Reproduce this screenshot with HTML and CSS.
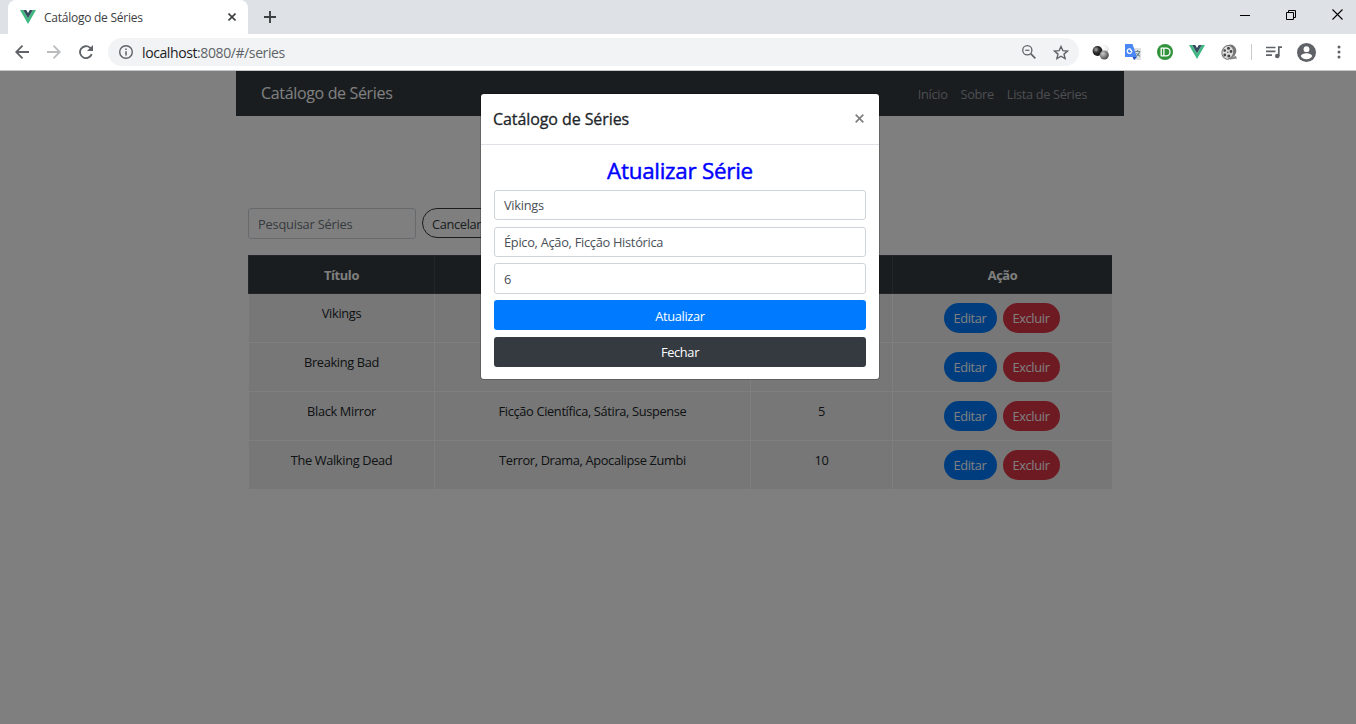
FILE: index.html
```html
<!DOCTYPE html>
<html lang="pt-BR">
<head>
<meta charset="utf-8">
<title>Catálogo de Séries</title>
<link rel="stylesheet" href="styles.css">
</head>
<body>
<header class="browser">
  <div class="tabstrip">
    <div class="tab">
      <svg class="vue" width="16" height="14" viewBox="0 0 16 14"><path fill="#41b883" d="M0 0h3.2L8 8.2 12.8 0H16L8 14z"/><path fill="#35495e" d="M3.2 0h3L8 3.1 9.800 0h3L8 8.2z"/></svg>
      <span class="tab-title">Catálogo de Séries</span>
      <svg class="tab-close" width="8" height="8" viewBox="0 0 8 8"><path d="M.5.5l7 7M7.500.5l-7 7" stroke="#3c4043" stroke-width="1.6"/></svg>
    </div>
    <svg class="new-tab" width="12" height="12" viewBox="0 0 12 12"><path d="M6 0v12M0 6h12" stroke="#3c4043" stroke-width="1.9"/></svg>
    <div class="window-controls">
      <svg width="10" height="10" viewBox="0 0 10 10"><path d="M0 5.500h10" stroke="#000"/></svg>
      <svg width="10" height="10" viewBox="0 0 10 10"><path d="M.5 2.500h7v7h-7zM2.500 2.500v-2h7v7h-2" fill="none" stroke="#000"/></svg>
      <svg width="11" height="11" viewBox="0 0 11 11"><path d="M.5.5l10 10M10.500.5l-10 10" stroke="#000" stroke-width="1.100"/></svg>
    </div>
  </div>
  <div class="toolbar">
    <div class="nav-icons">
      <svg width="14" height="14" viewBox="0 0 14 14" fill="none" stroke="#5f6368" stroke-width="1.800"><path d="M14 7H1.500M7.500.7L1.200 7l6.300 6.300"/></svg>
      <svg width="14" height="14" viewBox="0 0 14 14" fill="none" stroke="#babcbe" stroke-width="1.800"><path d="M0 7h12.500M6.500.7L12.800 7l-6.300 6.300"/></svg>
      <svg width="14" height="14" viewBox="0 0 14 14"><path d="M12.700 9.200A6 6 0 1 1 11 2.600l1.200 1.100" fill="none" stroke="#5f6368" stroke-width="1.900"/><path d="M14 0v6H8z" fill="#5f6368"/></svg>
    </div>
    <div class="omnibox">
      <svg width="14" height="14" viewBox="0 0 14 14"><circle cx="7" cy="7" r="6.300" fill="none" stroke="#5f6368" stroke-width="1.400"/><path d="M7 6.200v4.300M7 3.400V5" stroke="#5f6368" stroke-width="1.500"/></svg>
      <span class="url"><b>localhost</b>:8080/#/series</span>
      <svg class="zoom-icon" width="14" height="14" viewBox="0 0 14 14" fill="none" stroke="#5f6368"><circle cx="5.300" cy="5.300" r="4.600" stroke-width="1.300"/><path d="M8.700 8.700L13.300 13.300" stroke-width="1.700"/><path d="M3.200 5.300h4.200" stroke-width="1.200"/></svg>
      <svg width="16" height="15" viewBox="0 0 16 15"><path d="M8 1.500l1.900 4.200 4.600.4-3.500 3 1.100 4.500L8 11.200l-4.100 2.400L5 9.100l-3.500-3 4.600-.4z" fill="none" stroke="#5f6368" stroke-width="1.400"/></svg>
    </div>
    <div class="extensions">
      <svg width="17" height="16" viewBox="0 0 17 16">
        <defs>
          <radialGradient id="dark" cx=".35" cy=".35" r=".7"><stop offset="0" stop-color="#aaa"/><stop offset=".45" stop-color="#333"/><stop offset="1" stop-color="#111"/></radialGradient>
          <radialGradient id="light" cx=".4" cy=".35" r=".7"><stop offset="0" stop-color="#fff"/><stop offset=".7" stop-color="#eee"/><stop offset="1" stop-color="#bbb"/></radialGradient>
          <radialGradient id="mid" cx=".35" cy=".35" r=".7"><stop offset="0" stop-color="#ccc"/><stop offset="1" stop-color="#444"/></radialGradient>
        </defs>
        <circle cx="12" cy="5" r="4.500" fill="url(#light)"/><circle cx="5.500" cy="7" r="4.900" fill="url(#dark)"/><circle cx="12.300" cy="11" r="4.500" fill="url(#mid)"/>
      </svg>
      <svg width="16" height="16" viewBox="0 0 16 16"><path fill="#e0e0e0" d="M6 4h10v12H9z"/><path fill="#4a87f4" d="M0 0h7.500L12 13H0z"/><path fill="#2750b8" d="M7.500 13H12l-3 3z"/><path d="M7 5H4.800M6.800 5.200A2.300 2.300 0 1 1 6.200 4" transform="translate(0 1.500)" fill="none" stroke="#fff" stroke-width="1.200"/><path d="M10.300 7.500h5M12.500 6v1.500M14.500 8c-.5 2-2 3.500-3 4M11.500 9c.8 1.500 2 2.500 3.500 3.300" fill="none" stroke="#6f8a91" stroke-width="1.100"/></svg>
      <svg width="16" height="16" viewBox="0 0 16 16"><circle cx="8" cy="8" r="8" fill="#31933c"/><path d="M4.200 4.200h5a3.600 3.600 0 0 1 0 7.600h-5zM6.900 4v8" fill="none" stroke="#fff" stroke-width="1.300" stroke-linejoin="round"/></svg>
      <svg width="16" height="14" viewBox="0 0 16 14"><path fill="#41b883" d="M0 0h3.200L8 8.200 12.800 0H16L8 14z"/><path fill="#35495e" d="M3.200 0h3L8 3.100 9.800 0h3L8 8.200z"/></svg>
      <svg width="16" height="16" viewBox="0 0 16 16"><ellipse cx="9.500" cy="7" rx="5.800" ry="6.500" fill="#777"/><path d="M8 13.500l7-1.500 1 2.500-7 1z" fill="#888"/><ellipse cx="6.800" cy="8.300" rx="5.800" ry="6.900" transform="rotate(14 6.800 8.300)" fill="#ddd" stroke="#777"/><g fill="#444"><circle cx="7.500" cy="4.200" r="1.500"/><circle cx="3.700" cy="6.500" r="1.300"/><circle cx="10" cy="7.500" r="1.400"/><circle cx="3.800" cy="11" r="1.400"/><circle cx="7.800" cy="12" r="1.500"/><circle cx="6.800" cy="8.200" r=".7"/></g></svg>
      <i class="divider"></i>
      <svg width="16" height="13" viewBox="0 0 16 13"><path d="M0 1.500h9.500M0 5.300h9.500M0 9.200h6M12.800 10V1.200H16" fill="none" stroke="#5f6368" stroke-width="1.700"/><circle cx="11.300" cy="10" r="2.300" fill="#5f6368"/></svg>
      <svg class="avatar" width="19" height="19" viewBox="0 0 19 19"><circle cx="9.500" cy="9.500" r="9.500" fill="#5f6368"/><circle cx="9.500" cy="6.200" r="2.900" fill="#fff"/><path d="M3.800 13.200c0-2 3.800-3 5.700-3s5.700 1 5.700 3c-1.200 1.800-3.300 3-5.700 3s-4.500-1.200-5.700-3z" fill="#fff"/></svg>
      <svg class="menu" width="4" height="14" viewBox="0 0 4 14" fill="#5f6368"><circle cx="2" cy="2" r="1.500"/><circle cx="2" cy="7" r="1.500"/><circle cx="2" cy="12" r="1.500"/></svg>
    </div>
  </div>
</header>
<main class="page">
  <div class="container">
    <nav class="navbar">
      <span class="brand">Catálogo de Séries</span>
      <span class="link inicio">Início</span><span class="link sobre">Sobre</span><span class="link lista">Lista de Séries</span>
    </nav>
    <div class="search"><div class="field">Pesquisar Séries</div><div class="cancel">Cancelar</div></div>
    <div class="table">
      <div class="row head"><div>Título</div><div></div><div></div><div>Ação</div></div>
      <div class="row"><div>Vikings</div><div></div><div></div><div class="actions"><span class="pill edit">Editar</span><span class="pill delete">Excluir</span></div></div>
      <div class="row"><div>Breaking Bad</div><div></div><div></div><div class="actions"><span class="pill edit">Editar</span><span class="pill delete">Excluir</span></div></div>
      <div class="row"><div>Black Mirror</div><div>Ficção Científica, Sátira, Suspense</div><div>5</div><div class="actions"><span class="pill edit">Editar</span><span class="pill delete">Excluir</span></div></div>
      <div class="row"><div>The Walking Dead</div><div>Terror, Drama, Apocalipse Zumbi</div><div>10</div><div class="actions"><span class="pill edit">Editar</span><span class="pill delete">Excluir</span></div></div>
    </div>
  </div>
  <div class="backdrop">
    <section class="modal">
      <div class="modal-header"><span>Catálogo de Séries</span>
        <svg width="9" height="9" viewBox="0 0 9 9"><path d="M.7.7l7.600 7.600M8.300.7L.7 8.300" stroke="#7f7f7f" stroke-width="1.700"/></svg>
      </div>
      <div class="modal-body">
        <h2>Atualizar Série</h2>
        <div class="input">Vikings</div>
        <div class="input">Épico, Ação, Ficção Histórica</div>
        <div class="input seasons">6</div>
        <div class="btn primary">Atualizar</div>
        <div class="btn dark">Fechar</div>
      </div>
    </section>
  </div>
</main>
</body>
</html>
```
FILE: styles.css
```css
* { box-sizing: border-box; }
body { margin: 0; width: 1356px; height: 724px; overflow: hidden; display: flex; flex-direction: column; font: 12.8px/19px "Open Sans", "Noto Sans", sans-serif; letter-spacing: -0.34px; color: #212529; }
svg { display: block; flex: none; }
.browser { height: 71px; border-bottom: 1px solid #c4c6c8; background: #fff; }
.tabstrip { height: 34px; background: #dee1e6; display: flex; align-items: center; }
.tab { width: 240px; height: 34px; margin-left: 8px; padding: 0 12px; background: #fff; border-radius: 8px 8px 0 0; display: flex; align-items: center; }
.tab-title { margin-left: 8px; font-size: 12px; letter-spacing: -0.25px; color: #3c4043; flex: 1; }
.new-tab { margin-left: 16px; }
.window-controls { margin: 0 13px 5px auto; display: flex; align-items: center; gap: 36px; }
.toolbar { height: 36px; display: flex; align-items: center; }
.nav-icons { display: flex; gap: 18px; margin-left: 15px; }
.omnibox { margin-left: 15px; width: 971px; height: 28px; border-radius: 14px; background: #f1f3f4; display: flex; align-items: center; padding: 0 10px 0 11px; }
.url { margin-left: 9px; flex: 1; color: #5f6368; font-size: 14px; letter-spacing: -0.4px; }
.url b { font-weight: 400; color: #202124; }
.zoom-icon { margin-right: 17px; }
.extensions { display: flex; align-items: center; margin-left: 13px; gap: 16px; }
.divider { width: 1px; height: 16px; background: #c8cacc; margin: 0 -2px 0 -2px; }
.avatar { margin-left: -1px; }
.menu { margin-left: 5px; }
.page { flex: 1; display: grid; background: #fff; }
.container, .backdrop { grid-area: 1 / 1; }
.container { width: 888px; margin-left: 236px; }
.navbar { height: 45px; padding: 1px 37px 0 25px; background: #343a40; display: flex; align-items: center; }
.brand { flex: 1; color: #fff; font-size: 16px; letter-spacing: -0.34px; padding-bottom: 1px; }
.link { color: #9a9da0; }
.sobre, .lista { margin-left: 13px; }
.search { display: flex; gap: 6px; margin: 92px 0 0 12px; }
.field { width: 168px; height: 31px; padding: 6px 10px 6px 9px; border: 1px solid #ced4da; border-radius: 3px; color: #6c757d; letter-spacing: -0.2px; }
.cancel { width: 73px; height: 30px; border: 1px solid #343a40; border-radius: 15px; padding: 6px 9px; color: #343a40; }
.table { width: 864px; margin: 16px 0 0 12px; }
.row { display: grid; grid-template-columns: 186px 316px 142px 220px; height: 49px; background: #eee; text-align: center; }
.row > div { padding-top: 10px; border-left: 1px solid #fff; border-bottom: 1px solid #fff; }
.row.head { height: 39px; background: #343a40; color: #fff; font-weight: 700; }
.row.head > div { border: 1px solid #454d55; border-right: 0; }
.row > .actions { display: flex; justify-content: center; gap: 6px; padding: 9px 2px 0 0; }
.pill { height: 30px; border-radius: 15px; color: #fff; padding-top: 6px; }
.edit { width: 53px; background: #007bff; }
.delete { width: 57px; background: #dc3545; }
.backdrop { background: rgba(0,0,0,.5); display: flex; align-items: flex-start; justify-content: center; padding: 23px 0 0 4px; z-index: 1; }
.modal { width: 398px; height: 285px; background: #fff; border-radius: 3px; box-shadow: 0 0 0 1px rgba(0,0,0,.2); }
.modal-header { height: 51px; border-bottom: 1px solid #dee2e6; padding: 0 15px 0 12px; display: flex; align-items: center; justify-content: space-between; font-size: 16px; letter-spacing: -0.08px; -webkit-text-stroke: 0.3px #212529; }
.modal-header svg { margin-bottom: 2px; }
.modal-body { padding: 12px 13px; display: flex; flex-direction: column; gap: 6.4px; }
h2 { margin: 0; height: 26.6px; line-height: 28px; text-align: center; color: #00f; font-size: 22.4px; font-weight: 400; letter-spacing: -0.26px; -webkit-text-stroke: 0.45px #00f; }
.input, .btn { height: 30.3px; border-radius: 3px; padding: 5px 9px; }
.input { border: 1px solid #ced4da; color: #495057; letter-spacing: -0.28px; }
.seasons { padding-top: 6px; }
.btn { color: #fff; text-align: center; padding-top: 6px; }
.primary { background: #007bff; padding-top: 7px; }
.dark { background: #343a40; }
```
